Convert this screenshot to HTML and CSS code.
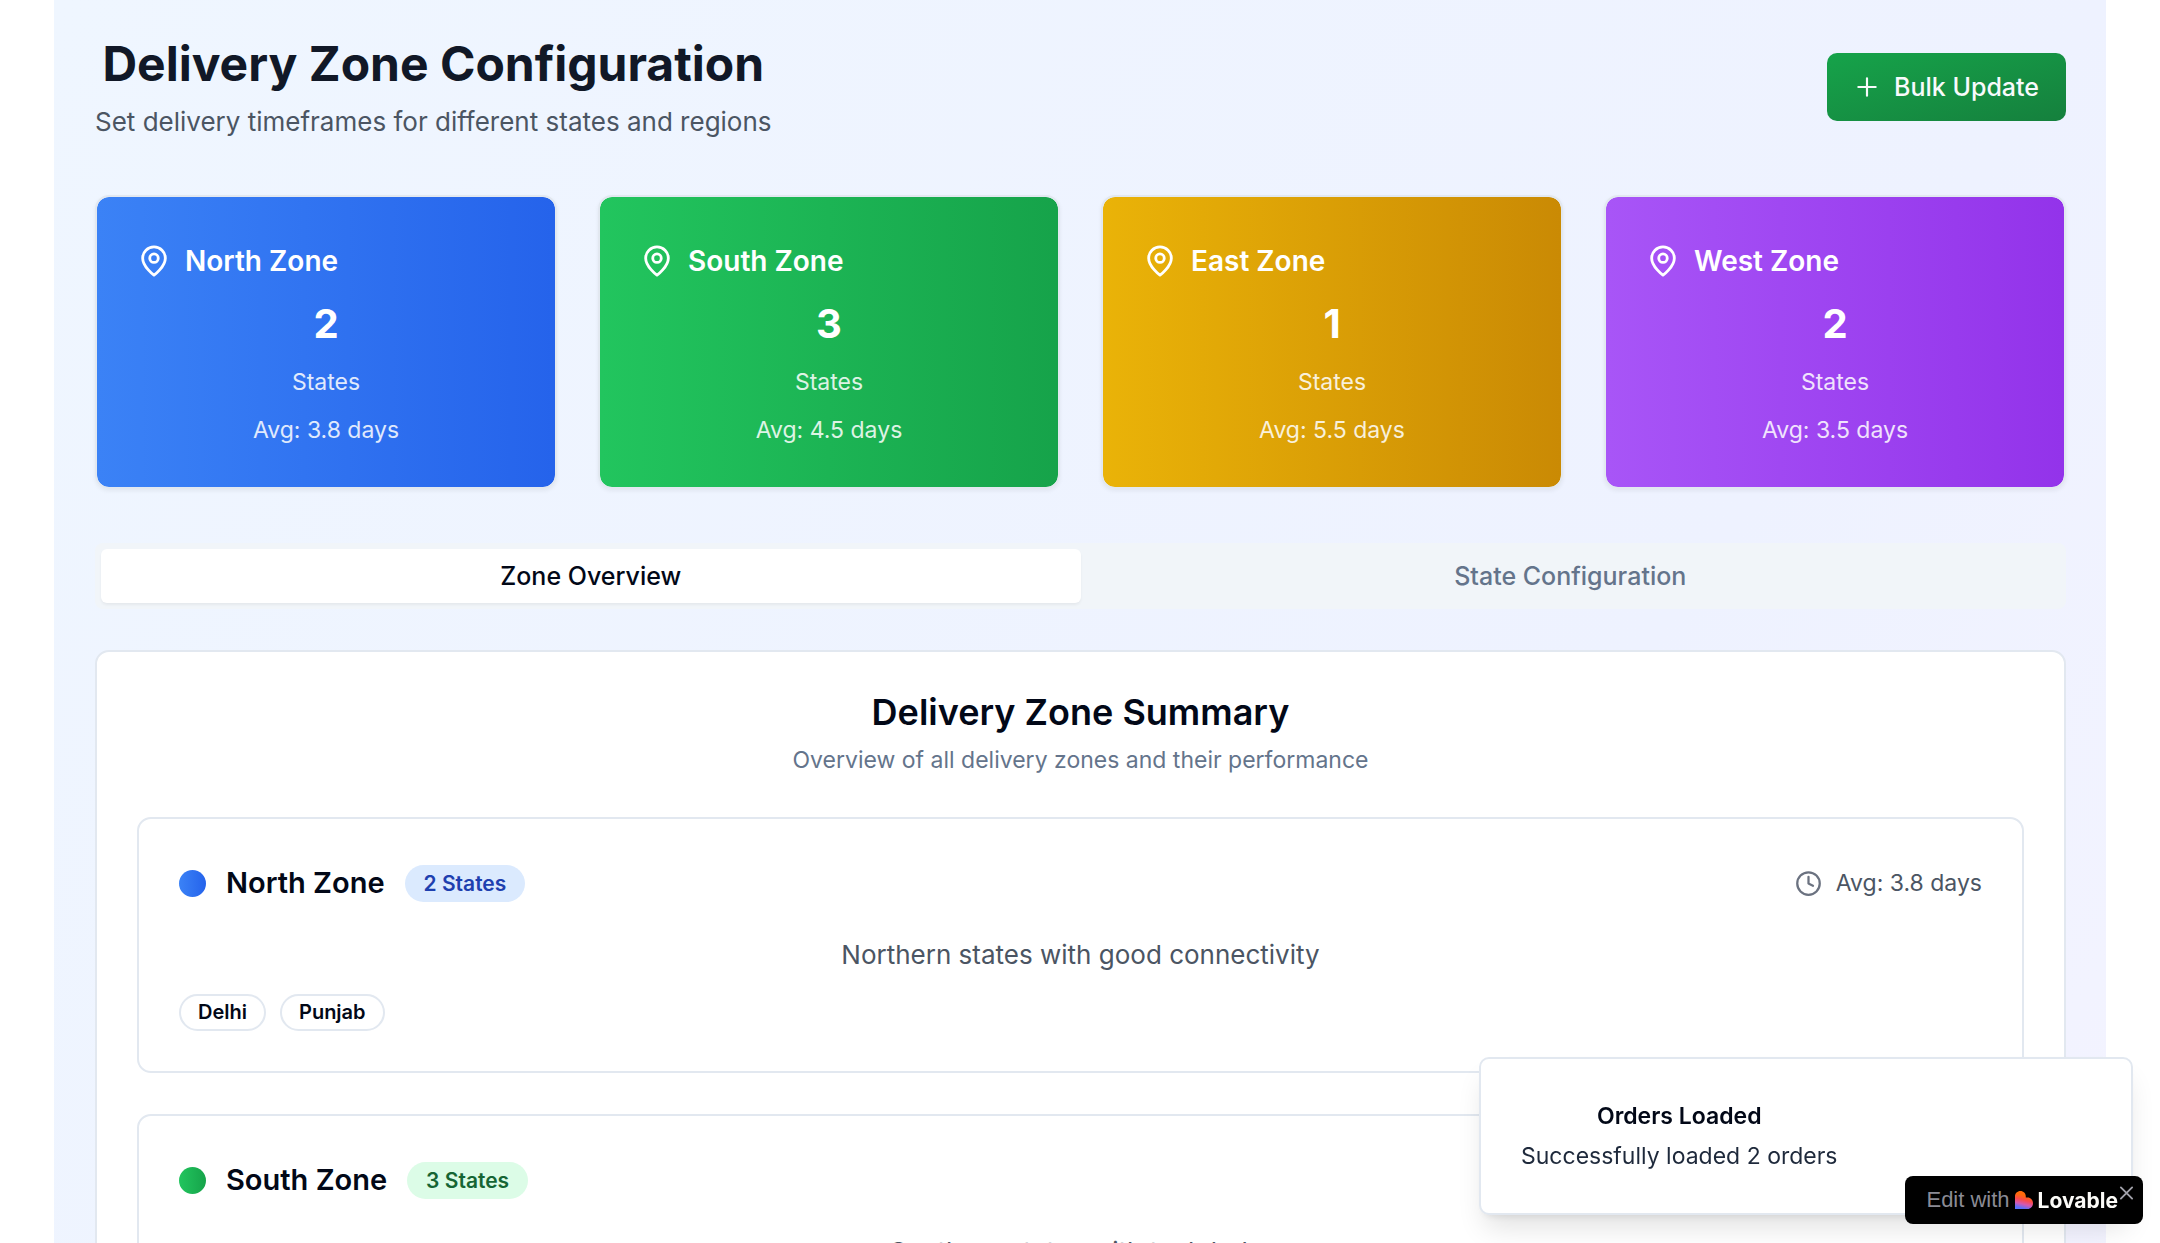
FILE: index.html
```html
<!DOCTYPE html>
<html lang="en">
<head>
<meta charset="utf-8">
<title>Delivery Zone Configuration</title>
<link rel="stylesheet" href="styles.css">
</head>
<body>
<svg class="sprite" aria-hidden="true">
  <symbol id="pin" viewBox="0 0 24 24"><path d="M20 10c0 6-8 12-8 12s-8-6-8-12a8 8 0 0 1 16 0Z"/><circle cx="12" cy="10" r="3"/></symbol>
  <symbol id="clock" viewBox="0 0 24 24"><circle cx="12" cy="12" r="10"/><path d="M12 6v6l4 2"/></symbol>
  <symbol id="plus" viewBox="0 0 24 24"><path d="M4 12h16M12 4v16"/></symbol>
  <symbol id="close" viewBox="0 0 24 24"><path d="M3 3l18 18M21 3L3 21"/></symbol>
</svg>
<main class="shell">
  <header class="header">
    <div class="heading">
      <h1 class="page-title">Delivery Zone Configuration</h1>
      <p class="page-subtitle">Set delivery timeframes for different states and regions</p>
    </div>
    <button class="bulk" type="button"><svg class="icon"><use href="#plus"/></svg>Bulk Update</button>
  </header>

  <section class="stats">
    <article class="stat north">
      <h3 class="stat-title"><svg class="icon pin"><use href="#pin"/></svg>North Zone</h3>
      <p class="stat-count">2</p><p class="stat-note">States</p><p class="stat-note">Avg: 3.8 days</p>
    </article>
    <article class="stat south">
      <h3 class="stat-title"><svg class="icon pin"><use href="#pin"/></svg>South Zone</h3>
      <p class="stat-count">3</p><p class="stat-note">States</p><p class="stat-note">Avg: 4.5 days</p>
    </article>
    <article class="stat east">
      <h3 class="stat-title"><svg class="icon pin"><use href="#pin"/></svg>East Zone</h3>
      <p class="stat-count">1</p><p class="stat-note">States</p><p class="stat-note">Avg: 5.5 days</p>
    </article>
    <article class="stat west">
      <h3 class="stat-title"><svg class="icon pin"><use href="#pin"/></svg>West Zone</h3>
      <p class="stat-count">2</p><p class="stat-note">States</p><p class="stat-note">Avg: 3.5 days</p>
    </article>
  </section>

  <div class="tabs" role="tablist">
    <button class="tab active" type="button" role="tab" aria-selected="true">Zone Overview</button>
    <button class="tab" type="button" role="tab" aria-selected="false">State Configuration</button>
  </div>

  <section class="panel">
    <h2 class="panel-title">Delivery Zone Summary</h2>
    <p class="panel-subtitle">Overview of all delivery zones and their performance</p>
    <div class="zones">
      <article class="zone">
        <div class="zone-head">
          <span class="dot north"></span>
          <h3 class="zone-title">North Zone</h3>
          <span class="badge badge-blue">2 States</span>
          <span class="average"><svg class="icon clock"><use href="#clock"/></svg>Avg: 3.8 days</span>
        </div>
        <p class="zone-text">Northern states with good connectivity</p>
        <div class="chips"><span class="badge chip">Delhi</span><span class="badge chip">Punjab</span></div>
      </article>
      <article class="zone">
        <div class="zone-head">
          <span class="dot south"></span>
          <h3 class="zone-title">South Zone</h3>
          <span class="badge badge-green">3 States</span>
          <span class="average"><svg class="icon clock"><use href="#clock"/></svg>Avg: 4.5 days</span>
        </div>
        <p class="zone-text">Southern states with tech hubs</p>
      </article>
    </div>
  </section>
</main>

<div class="toast" role="status">
  <div class="toast-body">
    <strong class="toast-title">Orders Loaded</strong>
    <span class="toast-text">Successfully loaded 2 orders</span>
  </div>
</div>

<aside class="edit-badge">
  <a class="edit-link" href="#">Edit with
    <svg class="heart" viewBox="0 0 18 18" aria-hidden="true">
      <defs>
        <linearGradient id="heart-fill" x1="0.6" y1="0" x2="0.35" y2="1">
          <stop offset="0.25" stop-color="#ff6a0a"/><stop offset="0.5" stop-color="#fb4b4b"/>
          <stop offset="0.72" stop-color="#d558b0"/><stop offset="0.95" stop-color="#5a70fb"/>
        </linearGradient>
      </defs>
      <path fill="url(#heart-fill)" d="M0 5.4C0 2.3 2.4 0 5.4 0s5.400 2.400 5.400 5.400v1.100h1.800c3 0 5.400 2.500 5.400 5.700S15.600 18 12.600 18H0Z"/>
    </svg>
    <b class="brand">Lovable</b></a>
  <button class="edit-close" type="button" aria-label="Close"><svg class="icon cross"><use href="#close"/></svg></button>
</aside>
</body>
</html>
```
FILE: styles.css
```css
* { box-sizing: border-box; margin: 0; padding: 0; }
body {
  height: 100vh;
  overflow: hidden;
  background: #fff;
  color: #020817;
  font-family: Inter, "Noto Sans", sans-serif;
  text-align: center;
}
button { border: 0; background: none; font: inherit; color: inherit; cursor: pointer; }
.sprite { display: none; }
.icon {
  width: 26px;
  height: 26px;
  flex: none;
  fill: none;
  stroke: currentColor;
  stroke-width: 2;
  stroke-linecap: round;
  stroke-linejoin: round;
}
.shell {
  height: 100%;
  margin: 0 54px;
  padding: 34px 40px 34px 41px;
  overflow: hidden;
  background: linear-gradient(to bottom right, #eff6ff, #eef2ff, #faf5ff) 0 0 / 100% 2900px;
}
.header { display: flex; justify-content: space-between; align-items: center; margin-bottom: 55px; }
.page-title { font-size: 48px; line-height: 60px; font-weight: 700; color: #111827; }
.page-subtitle { margin-top: 10px; font-size: 26px; line-height: 36px; color: #4b5563; }
.bulk {
  display: flex;
  align-items: center;
  gap: 14px;
  height: 68px;
  padding: 0 27px;
  border-radius: 10px;
  background: linear-gradient(to bottom right, #16a34a, #15803d);
  color: #f8fafc;
  font-size: 25px;
  font-weight: 500;
}

.stats { display: grid; grid-template-columns: repeat(4, 1fr); gap: 41px; margin-bottom: 54px; }
.stat {
  padding: 40px;
  border: 2px solid #e2e8f0;
  border-radius: 14px;
  background-clip: padding-box;
  box-shadow: 0 2px 4px rgb(0 0 0 / 6%);
  color: #fff;
}
.north { background-image: linear-gradient(to right, #3b82f6, #2563eb); }
.south { background-image: linear-gradient(to right, #22c55e, #16a34a); }
.east { background-image: linear-gradient(to right, #eab308, #ca8a04); }
.west { background-image: linear-gradient(to right, #a855f7, #9333ea); }
.stat-title { display: flex; align-items: center; gap: 14px; font-size: 28px; line-height: 48px; font-weight: 600; }
.pin { width: 34px; height: 34px; }
.stat-count { margin-top: 12px; font-size: 40px; line-height: 54px; font-weight: 700; }
.stat-note { margin-top: 14px; font-size: 23px; line-height: 34px; opacity: .85; }

.tabs {
  display: grid;
  grid-template-columns: 1fr 1fr;
  margin-bottom: 41px;
  padding: 6px;
  border-radius: 8px;
  background: #f1f5f9;
  color: #64748b;
}
.tab { height: 54px; border-radius: 6px; font-size: 25px; font-weight: 500; }
.tab.active { background: #fff; color: #020817; box-shadow: 0 2px 3px rgb(0 0 0 / 5%); }

.panel { padding: 40px; border: 2px solid #e2e8f0; border-radius: 14px; background: #fff; }
.panel-title { font-size: 36px; line-height: 40px; font-weight: 600; }
.panel-subtitle { margin-top: 11px; font-size: 23px; line-height: 34px; color: #64748b; }
.zones { display: grid; gap: 41px; margin-top: 40px; }
.zone { padding: 40px; border: 2px solid #e2e8f0; border-radius: 14px; }
.zone-head { display: flex; align-items: center; gap: 20px; height: 48px; }
.dot { width: 27px; height: 27px; border-radius: 50%; }
.zone-title { font-size: 29px; line-height: 48px; font-weight: 600; }
.badge { height: 37px; padding: 0 19px; border-radius: 19px; font-size: 20px; line-height: 37px; font-weight: 600; }
.badge-blue { background: #dbeafe; color: #1e40af; font-size: 21px; }
.badge-green { background: #dcfce7; color: #166534; font-size: 21px; }
.average { display: flex; align-items: center; gap: 14px; margin-left: auto; font-size: 23px; color: #4b5563; }
.clock { width: 27px; height: 27px; color: #6b7280; }
.zone-text { margin-top: 28px; font-size: 26px; line-height: 40px; color: #4b5563; }
.chips { display: flex; gap: 14px; margin-top: 19px; }
.chip { padding: 0 17px; border: 2px solid #e2e8f0; line-height: 33px; }

.toast {
  position: fixed;
  right: 27px;
  bottom: 28px;
  width: 654px;
  padding: 40px;
  border: 2px solid #e2e8f0;
  border-radius: 10px;
  background: #fff;
  box-shadow: 0 18px 28px -6px rgb(0 0 0 / 12%), 0 6px 10px -6px rgb(0 0 0 / 12%);
}
.toast-body { display: inline-grid; gap: 6px; float: left; }
.toast-title { font-size: 23px; line-height: 34px; font-weight: 600; }
.toast-text { font-size: 23px; line-height: 34px; color: #1e293b; }
.toast::after { content: ""; display: block; clear: both; }

.edit-badge {
  position: fixed;
  right: 17px;
  bottom: 19px;
  display: flex;
  height: 48px;
  padding: 0 9px 0 21px;
  border-radius: 8px;
  background: #000;
  font-family: "Liberation Sans", Arial, sans-serif;
}
.edit-link { display: flex; align-items: center; gap: 5px; font-size: 22px; color: #8b8b95; text-decoration: none; }
.heart { width: 18px; height: 18px; }
.brand { color: #fcfbf8; font-family: Inter, sans-serif; font-size: 21px; }
.edit-close { align-self: flex-start; height: 34px; margin-left: 1px; color: #a1a1aa; }
.cross { width: 15px; height: 34px; stroke-width: 3; }
```
